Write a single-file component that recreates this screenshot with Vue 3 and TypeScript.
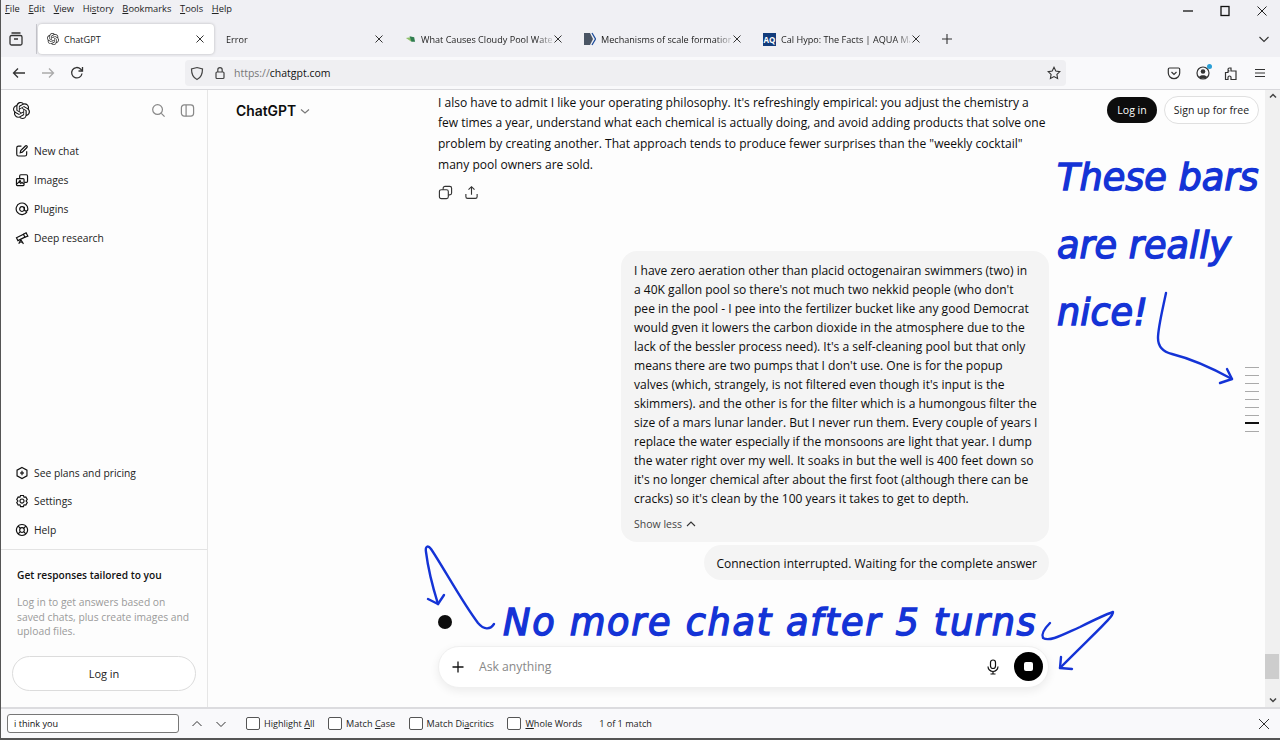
<script setup lang="ts">
const menus = [
  { pre: '', key: 'F', post: 'ile' },
  { pre: '', key: 'E', post: 'dit' },
  { pre: '', key: 'V', post: 'iew' },
  { pre: 'Hi', key: 's', post: 'tory' },
  { pre: '', key: 'B', post: 'ookmarks' },
  { pre: '', key: 'T', post: 'ools' },
  { pre: '', key: 'H', post: 'elp' },
]
const tabs = [
  { title: 'Error', icon: '' },
  { title: 'What Causes Cloudy Pool Wate', icon: 'leaf' },
  { title: 'Mechanisms of scale formation', icon: 'mech' },
  { title: 'Cal Hypo: The Facts | AQUA Ma', icon: 'aq' },
]
const knot = 'M22.28 9.82a5.98 5.98 0 0 0-.52-4.91 6.05 6.05 0 0 0-6.51-2.9A6.07 6.07 0 0 0 4.98 4.18a5.98 5.98 0 0 0-4 2.9 6.05 6.05 0 0 0 .74 7.1 5.98 5.98 0 0 0 .51 4.91 6.05 6.05 0 0 0 6.52 2.9A5.98 5.98 0 0 0 13.26 24a6.06 6.06 0 0 0 5.77-4.21 5.99 5.99 0 0 0 4-2.9 6.06 6.06 0 0 0-.75-7.07zm-9.02 12.61a4.48 4.48 0 0 1-2.88-1.04l.14-.08 4.78-2.76a.79.79 0 0 0 .39-.68v-6.74l2.02 1.17a.07.07 0 0 1 .04.05v5.58a4.5 4.5 0 0 1-4.49 4.5zm-9.66-4.13a4.47 4.47 0 0 1-.53-3.01l.14.09 4.78 2.76a.77.77 0 0 0 .78 0l5.85-3.37v2.33a.08.08 0 0 1-.04.06L9.74 19.95a4.5 4.5 0 0 1-6.14-1.65zM2.34 7.9a4.49 4.49 0 0 1 2.37-1.98v5.68a.77.77 0 0 0 .39.68l5.81 3.35-2.02 1.17a.08.08 0 0 1-.07 0l-4.83-2.79A4.5 4.5 0 0 1 2.34 7.87zm16.6 3.86-5.84-3.39L15.12 7.2a.08.08 0 0 1 .07 0l4.83 2.79a4.49 4.49 0 0 1-.68 8.1v-5.68a.79.79 0 0 0-.4-.66zm2.01-3.02-.14-.09-4.77-2.78a.78.78 0 0 0-.79 0L9.41 9.23V6.9a.07.07 0 0 1 .03-.06l4.83-2.79a4.5 4.5 0 0 1 6.68 4.66zM8.31 12.86l-2.02-1.16a.08.08 0 0 1-.04-.06V6.07a4.5 4.5 0 0 1 7.38-3.45l-.14.08L8.7 5.46a.79.79 0 0 0-.39.68zm1.1-2.37 2.6-1.5 2.6 1.5v3l-2.6 1.5-2.6-1.5z'
const topNav = [
  { label: 'New chat', paths: ['M11 3.500H6a3 3 0 0 0-3 3v11a3 3 0 0 0 3 3h11a3 3 0 0 0 3-3v-5', 'M9 15l.8-3.600 8-8a1.800 1.800 0 0 1 2.700 2.600l-8 8z'] },
  { label: 'Images', paths: ['M4 9.500h10a1.500 1.500 0 0 1 1.500 1.500v9a1.500 1.500 0 0 1-1.500 1.500H4A1.500 1.500 0 0 1 2.500 20v-9A1.500 1.500 0 0 1 4 9.500z', 'M8 9V5a2 2 0 0 1 2-2h9.500a2 2 0 0 1 2 2v9a2 2 0 0 1-2 2H16', 'M3 19l4-4 3 3 2-2 3 3', 'M8.500 13a1 1 0 1 0 .01 0'] },
  { label: 'Plugins', paths: ['M20.500 17A10 10 0 1 1 22 12c0 2-1 3.500-3 3.500S16 14 16 12', 'M12 8a4 4 0 1 0 .01 0', 'M16 8v4'] },
  { label: 'Deep research', paths: ['M2.500 11.500l12-6 2.500 5-12 6z', 'M14.500 5.500L19 3l3 6-5 1.500', 'M10 15l-3.500 7', 'M10 15l4.500 7', 'M8 19h4.500'] },
]
const lowerNav = [
  { label: 'See plans and pricing', paths: ['M12 2.500l8.500 4.700v9.600L12 21.500l-8.500-4.700V7.200z', 'M12 8v8', 'M8.500 12h7'] },
  { label: 'Settings', paths: ['M9.500 2.500h5l1 3 3-.5 2.500 4.500-2 2.500 2 2.500-2.500 4.500-3-.5-1 3h-5l-1-3-3 .5L3 14.500 5 12 3 9.500 5.500 5l3 .5z', 'M12 8.500a3.500 3.500 0 1 0 .01 0'] },
  { label: 'Help', paths: ['M12 2.500a9.500 9.500 0 1 0 .01 0', 'M12 8a4 4 0 1 0 .01 0', 'M5.500 5.500L9 9', 'M18.500 5.500L15 9', 'M5.500 18.500L9 15', 'M18.500 18.500L15 15'] },
]
const answer = [
  "I also have to admit I like your operating philosophy. It's refreshingly empirical: you adjust the chemistry a",
  'few times a year, understand what each chemical is actually doing, and avoid adding products that solve one',
  'problem by creating another. That approach tends to produce fewer surprises than the "weekly cocktail"',
  'many pool owners are sold.',
]
const question = [
  'I have zero aeration other than placid octogenairan swimmers (two) in',
  "a 40K gallon pool so there's not much two nekkid people (who don't",
  'pee in the pool - I pee into the fertilizer bucket like any good Democrat',
  'would gven it lowers the carbon dioxide in the atmosphere due to the',
  "lack of the bessler process need). It's a self-cleaning pool but that only",
  "means there are two pumps that I don't use. One is for the popup",
  "valves (which, strangely, is not filtered even though it's input is the",
  'skimmers). and the other is for the filter which is a humongous filter the',
  'size of a mars lunar lander. But I never run them. Every couple of years I',
  'replace the water especially if the monsoons are light that year. I dump',
  "the water right over my well. It soaks in but the well is 400 feet down so",
  "it's no longer chemical after about the first foot (although there can be",
  "cracks) so it's clean by the 100 years it takes to get to depth.",
]
const findOptions = [
  { pre: 'Highlight ', key: 'A', post: 'll' },
  { pre: 'Match ', key: 'C', post: 'ase' },
  { pre: 'Match Di', key: 'a', post: 'critics' },
  { pre: '', key: 'W', post: 'hole Words' },
]
const bars = [0, 1, 2, 3, 4, 5, 6, 7, 8]
</script>

<template>
  <div class="app">
    <header class="menubar">
      <nav class="menus">
        <span v-for="m in menus" :key="m.post">{{ m.pre }}<u>{{ m.key }}</u>{{ m.post }}</span>
      </nav>
      <div class="winctl">
        <svg width="14" height="14" viewBox="0 0 14 14"><path d="M2 7h10" stroke="#111" stroke-width="1.300" /></svg>
        <svg width="14" height="14" viewBox="0 0 14 14"><rect x="3" y="2.500" width="8" height="9" fill="none" stroke="#111" stroke-width="1.300" /></svg>
        <svg width="14" height="14" viewBox="0 0 14 14"><path d="M2.500 2.500l9 9m0-9l-9 9" stroke="#222" stroke-width="1" /></svg>
      </div>
    </header>

    <div class="tabbar">
      <div class="fxview">
        <svg width="16" height="16" viewBox="0 0 16 16" fill="none" stroke="#333" stroke-width="1.300"><rect x="2" y="4.500" width="12" height="9.500" rx="1.500" /><path d="M3.500 2h9M6 8h4" /></svg>
      </div>
      <div class="tab active">
        <svg class="fav" width="12" height="12" viewBox="0 0 24 24"><path :d="knot" fill="#333" /></svg>
        <span class="tabtitle">ChatGPT</span>
        <svg class="x" width="10" height="10" viewBox="0 0 10 10"><path d="M1.500 1.500l7 7m0-7l-7 7" stroke="#333" stroke-width="1" /></svg>
      </div>
      <div class="tab" v-for="t in tabs" :key="t.title">
        <svg v-if="t.icon === 'leaf'" class="fav" width="11" height="12" viewBox="0 0 12 12"><path d="M1 5l5-1 1 5z" fill="#8ebf6a" /><path d="M5 3l5 1 1 5-4 0z" fill="#2f7d4f" /></svg>
        <svg v-else-if="t.icon === 'mech'" class="fav" width="12" height="14" viewBox="0 0 12 14"><path d="M0 1h6l3 6-3 6H0z" fill="#4a5564" /><path d="M8 1l3.500 6L8 13" fill="none" stroke="#1f4e9c" stroke-width="1.300" /></svg>
        <span v-else-if="t.icon === 'aq'" class="aq">AQ</span>
        <span class="tabtitle fade">{{ t.title }}</span>
        <svg class="x" width="10" height="10" viewBox="0 0 10 10"><path d="M1.500 1.500l7 7m0-7l-7 7" stroke="#333" stroke-width="1" /></svg>
      </div>
      <svg class="plus" width="12" height="12" viewBox="0 0 12 12"><path d="M6 1v10M1 6h10" stroke="#333" stroke-width="1.100" /></svg>
      <svg class="tablist" width="12" height="12" viewBox="0 0 12 12"><path d="M1.500 4l4.500 4.500L10.500 4" fill="none" stroke="#333" stroke-width="1.100" /></svg>
    </div>

    <div class="navbar">
      <svg class="nb back" width="16" height="16" viewBox="0 0 16 16" fill="none" stroke="#333" stroke-width="1.300"><path d="M14 8H2.500M7 3.500L2.500 8 7 12.500" /></svg>
      <svg class="nb fwd" width="16" height="16" viewBox="0 0 16 16" fill="none" stroke="#aaa" stroke-width="1.300"><path d="M2 8h11.500M9 3.500L13.500 8 9 12.500" /></svg>
      <svg class="nb reload" width="16" height="16" viewBox="0 0 16 16" fill="none" stroke="#333" stroke-width="1.300"><path d="M13 8.500A5.200 5.200 0 1 1 11.500 4L13.500 6" /><path d="M13.500 2v4h-4" /></svg>
      <div class="urlbar">
        <svg width="14" height="15" viewBox="0 0 14 15" fill="none" stroke="#444" stroke-width="1.200"><path d="M7 1.500l5.500 1.500c0 5-1 8.500-5.500 10.500C2.500 11.500 1.500 8 1.500 3z" /></svg>
        <svg class="lock" width="12" height="14" viewBox="0 0 12 14" fill="none" stroke="#444" stroke-width="1.200"><rect x="2" y="6" width="8" height="6.500" rx="1" /><path d="M3.800 6V3.800a2.200 2.200 0 0 1 4.400 0V6" /></svg>
        <span class="url"><span class="dim">https://</span>chatgpt.com</span>
        <svg class="star" width="14" height="14" viewBox="0 0 14 14" fill="none" stroke="#333" stroke-width="1.100"><path d="M7 1.300l1.800 3.700 4 .6-2.900 2.800.7 4L7 10.500l-3.600 1.900.7-4L1.200 5.600l4-.6z" /></svg>
      </div>
      <div class="tools">
        <svg width="14" height="14" viewBox="0 0 14 14" fill="none" stroke="#333" stroke-width="1.200"><path d="M2.500 2h9A1.200 1.200 0 0 1 12.700 3.200V7A5.700 5.700 0 0 1 1.300 7V3.200A1.200 1.200 0 0 1 2.500 2z" /><path d="M4.500 6L7 8.500 9.500 6" /></svg>
        <span class="profile">
          <svg width="14" height="14" viewBox="0 0 14 14"><circle cx="7" cy="7" r="6" fill="none" stroke="#333" stroke-width="1.200" /><circle cx="7" cy="5.500" r="2.300" fill="#333" /><path d="M3 11c1-2.500 7-2.500 8 0-2 2-6 2-8 0z" fill="#333" /></svg>
          <i class="ping"></i>
        </span>
        <svg width="14" height="15" viewBox="0 0 14 15" fill="none" stroke="#333" stroke-width="1.200"><path d="M1.500 7h2.500V5.500h1.500a1.500 1.500 0 0 1 0-3H7V5.500h5v8.500H7v-2a1.500 1.500 0 0 0-3 0v2H1.500z" transform="translate(0 -.5)" /></svg>
        <svg width="14" height="14" viewBox="0 0 14 14" stroke="#333" stroke-width="1.200"><path d="M2 3.500h10M2 7h10M2 10.500h10" /></svg>
      </div>
    </div>

    <div class="page">
      <aside class="sidebar">
        <div class="side-top">
          <svg width="17" height="17" viewBox="0 0 24 24"><path :d="knot" fill="#111" /></svg>
          <div class="side-actions">
            <svg width="15" height="15" viewBox="0 0 16 16" fill="none" stroke="#888" stroke-width="1.300"><circle cx="7" cy="7" r="5.200" /><path d="M11 11l3.500 3.500" /></svg>
            <svg width="15" height="15" viewBox="0 0 16 16" fill="none" stroke="#888" stroke-width="1.300"><rect x="1.500" y="2" width="13" height="12" rx="3" /><path d="M6.500 2v12" /></svg>
          </div>
        </div>
        <ul class="nav">
          <li v-for="n in topNav" :key="n.label">
            <svg width="14" height="14" viewBox="0 0 24 24" fill="none" stroke="#111" stroke-width="2"><path v-for="p in n.paths" :key="p" :d="p" /></svg>
            <span>{{ n.label }}</span>
          </li>
        </ul>
        <ul class="nav lower">
          <li v-for="n in lowerNav" :key="n.label">
            <svg width="14" height="14" viewBox="0 0 24 24" fill="none" stroke="#111" stroke-width="2"><path v-for="p in n.paths" :key="p" :d="p" /></svg>
            <span>{{ n.label }}</span>
          </li>
        </ul>
        <section class="promo">
          <h3>Get responses tailored to you</h3>
          <p>Log in to get answers based on<br />saved chats, plus create images and<br />upload files.</p>
          <button class="side-login">Log in</button>
        </section>
      </aside>

      <main class="main">
        <div class="header">
          <div class="brand">ChatGPT
            <svg width="10" height="10" viewBox="0 0 10 10"><path d="M1 3.500l4 3.500 4-3.500" fill="none" stroke="#777" stroke-width="1.100" /></svg>
          </div>
          <div class="auth">
            <button class="login">Log in</button>
            <button class="signup">Sign up for free</button>
          </div>
        </div>
        <div class="thread">
          <div class="answer">
            <div v-for="l in answer" :key="l">{{ l }}</div>
          </div>
          <div class="acts">
            <svg width="15" height="15" viewBox="0 0 16 16" fill="none" stroke="#333" stroke-width="1.200"><rect x="1.500" y="5" width="9.500" height="9.500" rx="2" /><path d="M5.500 5V3.500a2 2 0 0 1 2-2h5a2 2 0 0 1 2 2v5a2 2 0 0 1-2 2H11" /></svg>
            <svg width="15" height="15" viewBox="0 0 16 16" fill="none" stroke="#333" stroke-width="1.200"><path d="M8 10.500V2M4.800 5L8 1.800 11.200 5M2 9.500v3a1.800 1.800 0 0 0 1.800 1.800h8.400a1.800 1.800 0 0 0 1.800-1.800v-3" /></svg>
          </div>
          <div class="bubble">
            <div v-for="l in question" :key="l">{{ l }}</div>
            <div class="less">Show less
              <svg width="10" height="10" viewBox="0 0 10 10"><path d="M1 7l4-4 4 4" fill="none" stroke="#333" stroke-width="1.100" /></svg>
            </div>
          </div>
          <div class="bubble small">Connection interrupted. Waiting for the complete answer</div>
          <i class="dot"></i>
          <div class="composer">
            <svg width="12" height="12" viewBox="0 0 12 12"><path d="M6 .5v11M.5 6h11" stroke="#111" stroke-width="1.300" /></svg>
            <span class="ask">Ask anything</span>
            <svg class="mic" width="14" height="16" viewBox="0 0 14 16" fill="none" stroke="#111" stroke-width="1.200"><rect x="4.500" y="1" width="5" height="8.500" rx="2.500" /><path d="M2 7.500a5 5 0 0 0 10 0M7 12.500V15M4.500 15h5" /></svg>
            <div class="stop"><i></i></div>
          </div>
        </div>
        <div class="scrollbar">
          <svg width="10" height="10" viewBox="0 0 10 10"><path d="M2 6.500l3-3 3 3" fill="none" stroke="#444" stroke-width="1.500" /></svg>
          <i class="thumb"></i>
          <svg width="10" height="10" viewBox="0 0 10 10"><path d="M2 3.500l3 3 3-3" fill="none" stroke="#444" stroke-width="1.500" /></svg>
        </div>
        <div class="turns">
          <i v-for="b in bars" :key="b" :class="{ on: b === 7 }"></i>
        </div>
      </main>
    </div>

    <footer class="findbar">
      <div class="findinput">i think you</div>
      <svg class="fa up" width="12" height="12" viewBox="0 0 12 12"><path d="M1.500 8L6 3.500 10.500 8" fill="none" stroke="#333" stroke-width="1" /></svg>
      <svg class="fa" width="12" height="12" viewBox="0 0 12 12"><path d="M1.500 4L6 8.500 10.500 4" fill="none" stroke="#333" stroke-width="1" /></svg>
      <label v-for="o in findOptions" :key="o.post" class="opt"><i class="cb"></i><span>{{ o.pre }}<u>{{ o.key }}</u>{{ o.post }}</span></label>
      <span class="count">1 of 1 match</span>
      <svg class="findclose" width="12" height="12" viewBox="0 0 12 12"><path d="M1 1l10 10m0-10L1 11" stroke="#333" stroke-width="1" /></svg>
    </footer>

    <div class="note n1">These bars</div>
    <div class="note n2">are really</div>
    <div class="note n3">nice!</div>
    <div class="note n4">No more chat after 5 turns</div>
    <svg class="ink" width="1280" height="740" viewBox="0 0 1280 740" fill="none" stroke="#1433d6" stroke-width="2.400" stroke-linecap="round" stroke-linejoin="round">
      <path d="M1166 293C1162 312 1158 328 1158 338C1158 348 1164 352 1172 354C1192 359 1212 368 1232 379" />
      <path d="M1227 369L1232 379L1220 383" />
      <path d="M494 624C490 630 484 630 478 623C462 602 442 565 431 549C428 545 425 546 426 552C428 568 433 588 438 604" />
      <path d="M428 599L438 604L444 595" />
      <path d="M1050 623C1045 628 1041 634 1043 638C1050 642 1062 635 1080 627C1092 621 1104 615 1113 612C1114 616 1100 628 1060 668" />
      <path d="M1061 657L1060 668L1072 669" />
    </svg>
  </div>
</template>

<style>
html, body { margin: 0; background: #fff; }
</style>

<style scoped>
.app {
  position: relative;
  width: 1280px;
  height: 740px;
  overflow: hidden;
  display: flex;
  flex-direction: column;
  box-sizing: border-box;
  border-left: 1px solid #555;
  border-bottom: 2px solid #555;
  font-family: "Open Sans", "Noto Sans", sans-serif;
  color: #0d0d0d;
  background: #f0f0f4;
}
.menubar {
  height: 19px;
  display: flex;
  align-items: center;
  justify-content: space-between;
  flex: none;
}
.menus {
  display: flex;
  gap: 8.700px;
  padding-left: 4px;
  font-size: 9.300px;
  color: #222;
  margin-top: -3px;
}
.winctl { display: flex; gap: 23px; padding-right: 11px; margin-top: 3px; }
.tabbar {
  height: 38px;
  display: flex;
  align-items: center;
  flex: none;
  padding-top: 2px;
  box-sizing: border-box;
}
.fxview {
  width: 36px;
  height: 30px;
  display: flex;
  align-items: center;
  padding-left: 7px;
  box-sizing: border-box;
  border-right: 1px solid #c9c9cf;
  flex: none;
}
.tab {
  width: 179px;
  height: 30px;
  flex: none;
  display: flex;
  align-items: center;
  box-sizing: border-box;
  padding: 0 9px 0 12px;
  font-size: 9.100px;
  color: #222;
  gap: 5px;
}
.tab.active {
  width: 176px;
  margin-left: 1px;
  padding-left: 9px;
  background: #fff;
  border-radius: 4px;
  box-shadow: 0 0 3px rgba(0, 0, 0, .25);
}
.tabtitle { flex: 1; min-width: 0; white-space: nowrap; }
.tabtitle.fade {
  margin-right: -4px;
  -webkit-mask-image: linear-gradient(to right, #000 88%, rgba(0, 0, 0, .2));
  mask-image: linear-gradient(to right, #000 88%, rgba(0, 0, 0, .2));
}
.fav { flex: none; }
.x { flex: none; }
.aq {
  width: 13px;
  height: 13px;
  background: #123c7c;
  color: #fff;
  font-size: 8px;
  font-weight: 700;
  line-height: 13px;
  text-align: center;
  flex: none;
}
.plus { margin-left: 11px; flex: none; }
.tablist { margin-left: auto; margin-right: 10px; flex: none; }
.navbar {
  height: 33px;
  background: #f9f9fb;
  display: flex;
  align-items: center;
  flex: none;
  box-sizing: border-box;
  border-bottom: 1px solid #d8d8dc;
  padding-left: 10px;
}
.nb { flex: none; margin-right: 13px; }
.reload { margin-right: 0; }
.urlbar {
  margin-left: 100px;
  width: 881px;
  height: 26px;
  flex: none;
  border-radius: 4px;
  background: #efeff2;
  display: flex;
  align-items: center;
  padding: 0 5px 0 5px;
  box-sizing: border-box;
}
.lock { margin-left: 10px; }
.url { font-size: 10.500px; margin-left: 8px; flex: 1; color: #111; }
.dim { color: #777; }
.tools {
  display: flex;
  align-items: center;
  gap: 14.500px;
  margin-left: 101px;
}
.profile { position: relative; display: flex; }
.ping {
  position: absolute;
  right: -2px;
  top: -2px;
  width: 5px;
  height: 5px;
  border-radius: 50%;
  background: #2a9fd6;
}
.page { flex: 1; display: flex; min-height: 0; background: #fdfdfd; }
.sidebar {
  width: 207px;
  flex: none;
  border-right: 1px solid #e6e6e6;
  box-sizing: border-box;
  display: flex;
  flex-direction: column;
  font-size: 10.300px;
  background: #fdfdfd;
}
.side-top {
  height: 40px;
  display: flex;
  align-items: center;
  justify-content: space-between;
  padding: 0 12px;
}
.side-actions { display: flex; gap: 14px; }
.nav {
  list-style: none;
  margin: 6px 0 0;
  padding: 0 0 0 14px;
  display: flex;
  flex-direction: column;
}
.nav li { height: 29px; display: flex; align-items: center; gap: 5px; color: #222; }
.nav.lower { margin-top: auto; }
.nav.lower li { height: 28.600px; }
.promo {
  border-top: 1px solid #e3e3e3;
  height: 158px;
  box-sizing: border-box;
  margin-top: 5px;
  padding: 17px 11px 0;
}
.promo h3 {
  margin: 0 0 0 5px;
  font-size: 10.200px;
  font-weight: 600;
  line-height: 16px;
  color: #111;
}
.promo p {
  margin: 12px 0 0 5px;
  font-size: 10.300px;
  line-height: 14.500px;
  color: #9a9a9a;
}
.side-login {
  margin-top: 17px;
  width: 184px;
  height: 35px;
  border-radius: 18px;
  background: #fff;
  border: 1px solid #dcdcdc;
  font: inherit;
  font-size: 11px;
  color: #222;
}
.main { flex: 1; position: relative; min-width: 0; display: flex; }
.header {
  position: absolute;
  left: 0;
  right: 21px;
  top: 6px;
  display: flex;
  justify-content: space-between;
  align-items: center;
  padding-left: 28px;
}
.brand {
  font-size: 13.900px;
  font-weight: 600;
  display: flex;
  align-items: center;
  gap: 4px;
  font-family: "Inter", "Open Sans", sans-serif;
  padding-top: 2px;
}
.auth { display: flex; gap: 7px; align-items: center; }
.login, .signup {
  font: inherit;
  font-size: 10.500px;
  border-radius: 14px;
  padding: 0;
}
.login { width: 50px; height: 26px; background: #0d0d0d; color: #fff; border: none; }
.signup { width: 95px; height: 28px; background: #fff; color: #222; border: 1px solid #e0e0e0; }
.thread {
  margin-left: 230px;
  width: 611px;
  flex: none;
  font-size: 12.060px;
  display: flex;
  flex-direction: column;
  align-items: flex-end;
}
.answer {
  align-self: flex-start;
  line-height: 20.700px;
  white-space: nowrap;
  margin-top: 2.500px;
}
.acts {
  align-self: flex-start;
  display: flex;
  gap: 11px;
  margin-top: 9.500px;
  height: 15px;
}
.bubble {
  background: #f4f4f4;
  border-radius: 16px;
  width: 428px;
  box-sizing: border-box;
  padding: 10px 13px 10px;
  line-height: 19px;
  white-space: nowrap;
  margin-top: 51px;
}
.less {
  display: flex;
  align-items: center;
  gap: 4px;
  font-size: 10.500px;
  color: #444;
  height: 19px;
  margin-top: 7px;
  margin-bottom: -2px;
}
.bubble.small {
  width: auto;
  margin-top: 3px;
  height: 35px;
  padding: 0 12px;
  line-height: 37px;
  border-radius: 18px;
}
.dot {
  align-self: flex-start;
  width: 14px;
  height: 14px;
  border-radius: 50%;
  background: #0d0d0d;
  margin-top: 35px;
  margin-bottom: 17px;
}
.composer {
  align-self: stretch;
  height: 42px;
  border-radius: 21px;
  background: #fff;
  border: 1px solid #f0f0f0;
  box-sizing: border-box;
  box-shadow: 0 3px 10px rgba(0, 0, 0, .07);
  display: flex;
  align-items: center;
  padding: 0 5px 0 13px;
  color: #888;
}
.ask { flex: 1; margin-left: 15px; font-size: 12.200px; }
.mic { margin-right: 14px; }
.stop {
  width: 29px;
  height: 29px;
  border-radius: 50%;
  background: #000;
  display: flex;
  align-items: center;
  justify-content: center;
}
.stop i { width: 9px; height: 9px; border-radius: 2px; background: #fff; }
.scrollbar {
  position: absolute;
  right: 0;
  top: 0;
  bottom: 0;
  width: 15px;
  background: #f0f0f0;
  display: flex;
  flex-direction: column;
  align-items: center;
  justify-content: space-between;
  padding: 1px 0 2px;
  box-sizing: border-box;
}
.thumb {
  position: absolute;
  top: 564px;
  left: 0;
  width: 14px;
  height: 25px;
  background: #cdcdcd;
}
.turns {
  position: absolute;
  right: 21px;
  top: 277px;
  display: flex;
  flex-direction: column;
  gap: 7px;
}
.turns i { width: 14px; height: 1px; background: #aaa; display: block; }
.turns i.on { background: #111; height: 2px; margin-top: -1px; }
.findbar {
  height: 31px;
  flex: none;
  display: flex;
  align-items: center;
  background: #f9f9fb;
  border-top: 2px solid #dcdcdf;
  box-sizing: border-box;
  padding-left: 6px;
  font-size: 9.100px;
  color: #222;
}
.findinput {
  width: 172px;
  height: 19px;
  border: 1px solid #777;
  border-radius: 3px;
  box-sizing: border-box;
  padding-left: 6px;
  line-height: 17px;
  background: #fff;
  color: #111;
}
.fa { margin-left: 12px; flex: none; }
.opt { display: flex; align-items: center; gap: 4px; margin-left: 13.500px; white-space: nowrap; }
.fa + .opt { margin-left: 19px; }
.cb {
  width: 14px;
  height: 13px;
  box-sizing: border-box;
  border: 1px solid #555;
  border-radius: 2px;
  background: #fff;
  display: block;
}
.count { margin-left: 17px; }
.findclose { margin-left: auto; margin-right: 10px; }
.note {
  position: absolute;
  color: #1433d6;
  font-family: "DejaVu Sans", sans-serif;
  font-style: italic;
  font-weight: 400;
  -webkit-text-stroke: 1.400px #1433d6;
  white-space: nowrap;
  line-height: 1;
  font-size: 36.700px;
}
.n1 { left: 1056px; top: 160px; }
.n2 { left: 1056px; top: 228px; }
.n3 { left: 1056px; top: 295px; }
.n4 { left: 502px; top: 605px; letter-spacing: 1.700px; }
.ink { position: absolute; left: -1px; top: 0; pointer-events: none; }
</style>
